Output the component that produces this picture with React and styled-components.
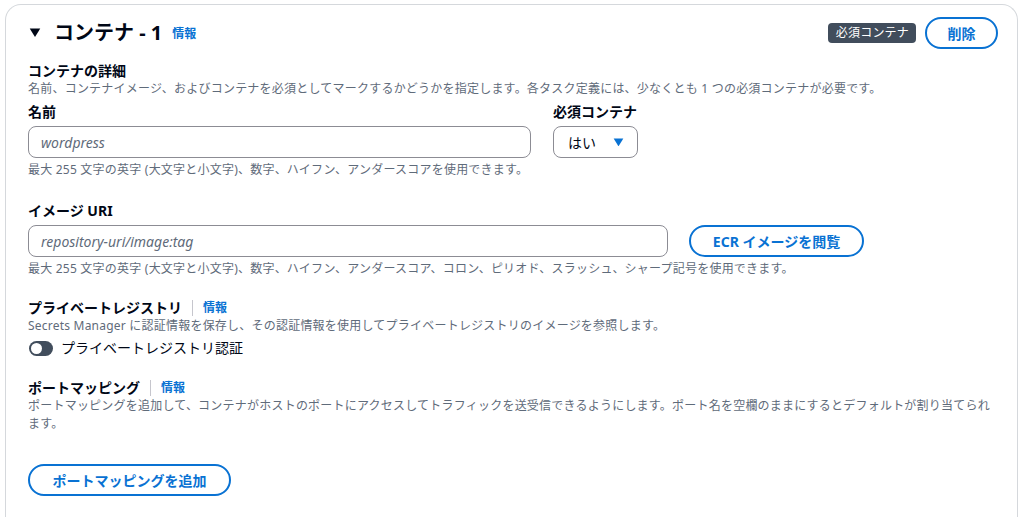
import React from "react";
import styled, { createGlobalStyle } from "styled-components";

const Global = createGlobalStyle`
  html, body {
    margin: 0;
    padding: 0;
    background: #ffffff;
  }
  body {
    font-family: "Noto Sans", "Noto Sans CJK JP", sans-serif;
    color: #000716;
  }
`;

const Page = styled.div`
  padding: 4px 6px 0 5px;
  height: 517px;
  box-sizing: border-box;
  overflow: hidden;
`;

const Card = styled.section`
  border: 1px solid #d5d8dc;
  border-bottom: none;
  border-radius: 16px 16px 0 0;
  padding: 12px 19px 40px 22px;
  min-height: 540px;
  box-sizing: border-box;
`;

const Header = styled.div`
  display: flex;
  align-items: center;
  justify-content: space-between;
  height: 32px;
`;

const TitleWrap = styled.div`
  display: flex;
  align-items: baseline;
  gap: 10px;
`;

const Title = styled.h2`
  margin: 0;
  display: flex;
  align-items: center;
  gap: 13px;
  font-size: 20px;
  font-weight: 700;
  line-height: 24px;
  padding-left: 1px;
`;

const Actions = styled.div`
  display: flex;
  align-items: center;
  gap: 9px;
`;

const Badge = styled.span`
  background: #414d5c;
  color: #ffffff;
  font-size: 12px;
  line-height: 20px;
  padding: 0 7px 0 8px;
  border-radius: 4px;
  letter-spacing: 0.2px;
`;

const PillButton = styled.button`
  font-family: inherit;
  background: #ffffff;
  border: 2px solid #0972d3;
  border-radius: 20px;
  color: #0972d3;
  font-weight: 700;
  font-size: 14px;
  height: 32px;
  padding: 0 18px;
  min-width: ${(p) => p.$w || 0}px;
  cursor: pointer;
`;

const Info = styled.a`
  color: #0972d3;
  font-size: 12px;
  font-weight: 700;
  text-decoration: none;
`;

const Section = styled.div`
  margin-top: ${(p) => p.$mt || 0}px;
`;

const SectionHead = styled.div`
  display: flex;
  align-items: center;
  font-size: 14px;
  font-weight: 700;
  line-height: 18px;
`;

const Divider = styled.span`
  width: 1px;
  height: 16px;
  background: #c6c6cd;
  margin: 0 10px 0 10px;
`;

const Desc = styled.p`
  margin: 0;
  font-size: 12px;
  line-height: 18px;
  color: #5f6b7a;
  letter-spacing: 0.22px;
`;

const Row = styled.div`
  display: flex;
  align-items: flex-start;
  gap: 22px;
  margin-top: ${(p) => p.$mt || 0}px;
`;

const Field = styled.div`
  display: flex;
  flex-direction: column;
`;

const Label = styled.label`
  font-size: 14px;
  font-weight: 700;
  line-height: 18px;
  margin-bottom: 5px;
`;

const Input = styled.input`
  font-family: inherit;
  box-sizing: border-box;
  height: 32px;
  width: ${(p) => p.$w}px;
  border: 1px solid #8c8c94;
  border-radius: 8px;
  padding: 0 12px;
  font-size: 14px;
  &::placeholder {
    color: #5f6b7a;
    font-style: italic;
  }
`;

const Select = styled.div`
  box-sizing: border-box;
  height: 32px;
  width: 85px;
  border: 1px solid #8c8c94;
  border-radius: 8px;
  padding: 0 13px 0 14px;
  display: flex;
  align-items: center;
  justify-content: space-between;
  font-size: 14px;
`;

const Hint = styled.p`
  margin: 3px 0 0;
  font-size: 12px;
  line-height: 18px;
  color: #5f6b7a;
  letter-spacing: 0.22px;
`;

const InputWithButton = styled.div`
  display: flex;
  align-items: center;
  gap: 21px;
`;

const ToggleRow = styled.label`
  display: flex;
  align-items: center;
  gap: 8px;
  font-size: 14px;
  line-height: 20px;
  margin-top: 3px;
  padding-left: 1px;
`;

const Track = styled.span`
  width: 24px;
  height: 15px;
  border-radius: 8px;
  background: #414d5c;
  position: relative;
  display: inline-block;
`;

const Knob = styled.span`
  position: absolute;
  top: 2px;
  left: 2px;
  width: 11px;
  height: 11px;
  border-radius: 50%;
  background: #ffffff;
`;

const Caret = ({ size = 12, color = "#000716" }) => (
  <svg width={size} height={size * 0.8} viewBox="0 0 12 10">
    <path d="M0.5 0.5 H11.5 L6 9.5 Z" fill={color} />
  </svg>
);

export default function App() {
  return (
    <>
      <Global />
      <Page>
        <Card>
          <Header>
            <TitleWrap>
              <Title>
                <Caret size={12} />
                コンテナ - 1
              </Title>
              <Info href="#">情報</Info>
            </TitleWrap>
            <Actions>
              <Badge>必須コンテナ</Badge>
              <PillButton $w={73}>削除</PillButton>
            </Actions>
          </Header>

          <Section $mt={13}>
            <SectionHead>コンテナの詳細</SectionHead>
            <Desc>
              名前、コンテナイメージ、およびコンテナを必須としてマークするかどうかを指定します。各タスク定義には、少なくとも 1 つの必須コンテナが必要です。
            </Desc>
          </Section>

          <Row $mt={5}>
            <Field>
              <Label>名前</Label>
              <Input $w={503} placeholder="wordpress" />
              <Hint>最大 255 文字の英字 (大文字と小文字)、数字、ハイフン、アンダースコアを使用できます。</Hint>
            </Field>
            <Field>
              <Label>必須コンテナ</Label>
              <Select>
                はい
                <Caret size={11} color="#0972d3" />
              </Select>
            </Field>
          </Row>

          <Section $mt={23}>
            <Field>
              <Label>イメージ URI</Label>
              <InputWithButton>
                <Input $w={640} placeholder="repository-uri/image:tag" />
                <PillButton $w={175}>ECR イメージを閲覧</PillButton>
              </InputWithButton>
              <Hint>最大 255 文字の英字 (大文字と小文字)、数字、ハイフン、アンダースコア、コロン、ピリオド、スラッシュ、シャープ記号を使用できます。</Hint>
            </Field>
          </Section>

          <Section $mt={21}>
            <SectionHead>
              プライベートレジストリ
              <Divider />
              <Info href="#">情報</Info>
            </SectionHead>
            <Desc>Secrets Manager に認証情報を保存し、その認証情報を使用してプライベートレジストリのイメージを参照します。</Desc>
            <ToggleRow>
              <Track>
                <Knob />
              </Track>
              プライベートレジストリ認証
            </ToggleRow>
          </Section>

          <Section $mt={21}>
            <SectionHead>
              ポートマッピング
              <Divider />
              <Info href="#">情報</Info>
            </SectionHead>
            <Desc>
              ポートマッピングを追加して、コンテナがホストのポートにアクセスしてトラフィックを送受信できるようにします。ポート名を空欄のままにするとデフォルトが割り当てられます。
            </Desc>
          </Section>

          <Section $mt={31}>
            <PillButton $w={203}>ポートマッピングを追加</PillButton>
          </Section>
        </Card>
      </Page>
    </>
  );
}
